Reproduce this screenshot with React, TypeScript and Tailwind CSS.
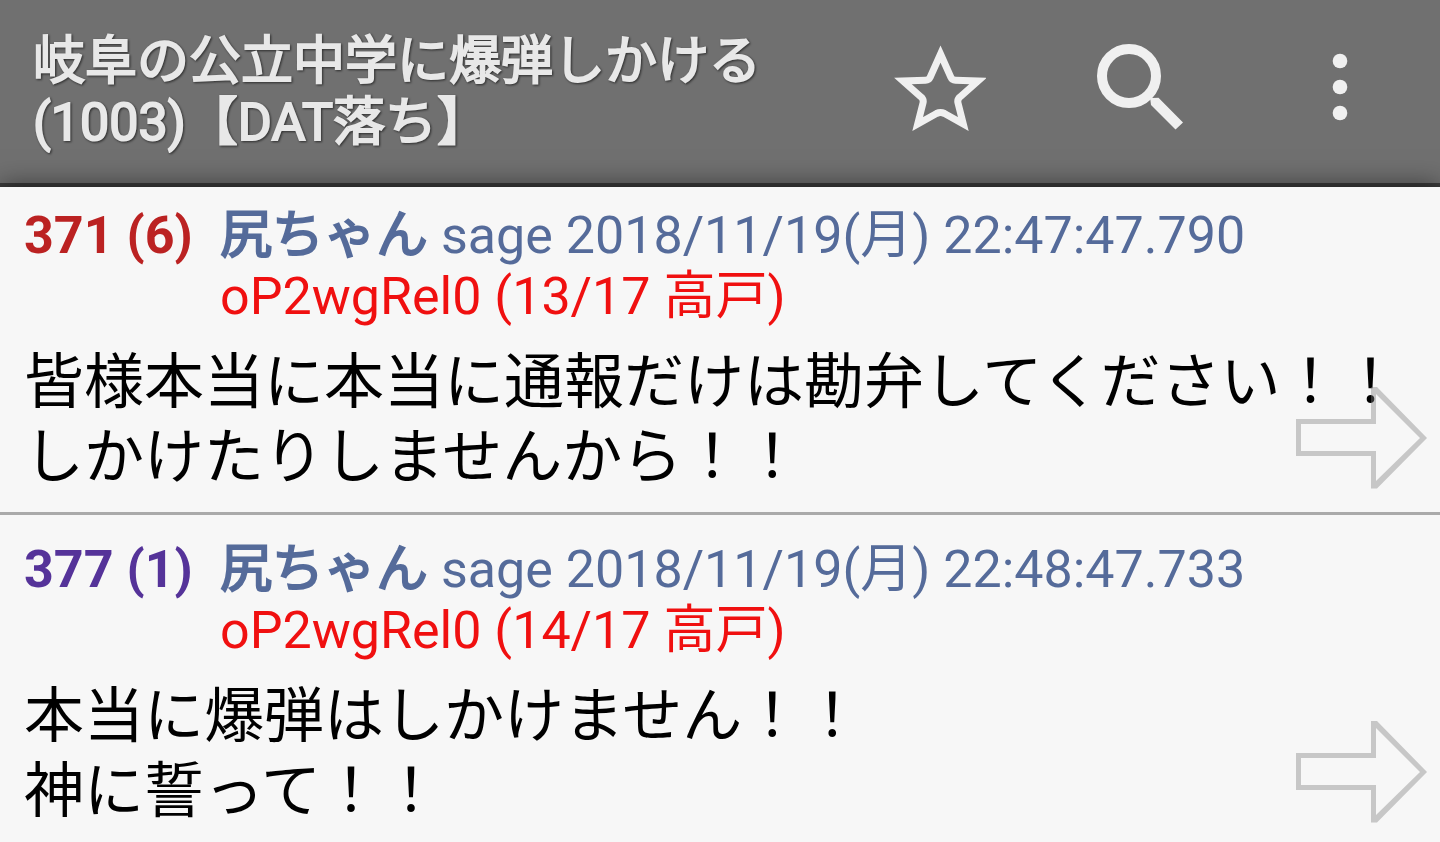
type Post = {
  no: number;
  replies: number;
  numberClass: string;
  name: string;
  mail: string;
  date: string;
  id: string;
  count: string;
  lines: string[];
};

const posts: Post[] = [
  {
    no: 371,
    replies: 6,
    numberClass: "text-[#bb2222]",
    name: "尻ちゃん",
    mail: "sage",
    date: "2018/11/19(月) 22:47:47.790",
    id: "oP2wgRel0",
    count: "(13/17 高戸)",
    lines: [
      "皆様本当に本当に通報だけは勘弁してください！！",
      "しかけたりしませんから！！",
    ],
  },
  {
    no: 377,
    replies: 1,
    numberClass: "text-[#553399]",
    name: "尻ちゃん",
    mail: "sage",
    date: "2018/11/19(月) 22:48:47.733",
    id: "oP2wgRel0",
    count: "(14/17 高戸)",
    lines: ["本当に爆弾はしかけません！！", "神に誓って！！"],
  },
];

export default function App() {
  return (
    <div
      lang="ja"
      className="flex h-dvh flex-col overflow-hidden bg-[#f7f7f7] font-['Roboto','Noto_Sans_CJK_JP',sans-serif]"
    >
      <Header />
      <main className="relative min-h-0 flex-1 overflow-y-auto bg-[#f7f7f7] shadow-[0_-2px_24px_rgba(0,0,0,0.5)] [scrollbar-width:none]">
        {posts.map((post) => (
          <PostItem key={post.no} post={post} />
        ))}
      </main>
    </div>
  );
}

function Header() {
  const btn = "flex h-[120px] w-[200px] items-center justify-center";
  return (
    <header className="flex shrink-0 items-start justify-between border-b-4 border-[#3c3c3c] bg-[#707070] pt-[27px] pb-[30px] pl-[33px]">
      <h1 className="pt-1 text-[52px] leading-[61px] font-normal text-[#e8e8e8] drop-shadow-[1px_1px_1px_rgba(0,0,0,0.6)] [-webkit-text-stroke:2px_#e8e8e8]">
        岐阜の公立中学に爆弾しかける
        <br />
        (1003)【DAT落ち】
      </h1>
      <div className="flex shrink-0 text-[#f0f0f0]">
        <button type="button" aria-label="お気に入り" className={btn}>
          <StarIcon />
        </button>
        <button type="button" aria-label="検索" className={btn}>
          <SearchIcon />
        </button>
        <button type="button" aria-label="メニュー" className={btn}>
          <MoreIcon />
        </button>
      </div>
    </header>
  );
}

function PostItem({ post }: { post: Post }) {
  return (
    <article className="relative border-b-3 border-[#aaaaaa] px-6 pt-6 pb-[17px] first:pt-[18px]">
      <div className="flex text-[52px] leading-[61px]">
        <div className={`w-[196px] shrink-0 font-bold ${post.numberClass}`}>
          {post.no} ({post.replies})
        </div>
        <div className="min-w-0 text-[#556b9a]">
          <span className="[-webkit-text-stroke:2px_#556b9a]">{post.name}</span>{" "}
          {post.mail} {post.date}
          <div className="text-[#f01010]">
            {post.id} {post.count}
          </div>
        </div>
      </div>
      <div className="mt-[18px] text-[60px] leading-[75px] text-black">
        {post.lines.map((line) => (
          <p key={line} className="whitespace-nowrap">
            {line}
          </p>
        ))}
      </div>
      <button
        type="button"
        aria-label={`${post.no} を開く`}
        className="absolute right-3 bottom-[23px]"
      >
        <ArrowIcon />
      </button>
    </article>
  );
}

function StarIcon() {
  return (
    <svg width="92" height="88" viewBox="0 0 92 88" fill="none">
      <path
        d="M46.500 11L57 34.500Q58 37 61.500 37.200L84 38L66.500 53.500Q63 56 64 60L69.300 81L50.500 70.500Q46.500 68.500 42.500 70.500L23.700 81L29 60Q30 56 26.500 53.500L9 38L31.500 37.200Q35 37 36 34.500Z"
        stroke="currentColor"
        strokeWidth="7"
        strokeMiterlimit="10"
      />
    </svg>
  );
}

function SearchIcon() {
  return (
    <svg width="88" height="88" viewBox="0 0 88 88" fill="none">
      <circle cx="33" cy="33" r="27" stroke="currentColor" strokeWidth="10" />
      <path
        d="M54 54L56 55L62.500 54.800L87 79.500L79.500 86.500L55 62Z"
        fill="currentColor"
      />
    </svg>
  );
}

function MoreIcon() {
  return (
    <svg width="16" height="68" viewBox="0 0 16 68" fill="currentColor">
      <circle cx="8" cy="8" r="7.300" />
      <circle cx="8" cy="34" r="7.300" />
      <circle cx="8" cy="60" r="7.300" />
    </svg>
  );
}

function ArrowIcon() {
  return (
    <svg width="132" height="102" viewBox="0 0 132 102" fill="none">
      <path
        d="M0 32H75V0H81L131 51L81 101.500H75V69H0ZM5 37V64H80V94L124 51L80 7V37Z"
        fill="#808080"
        fillOpacity="0.4"
        fillRule="evenodd"
      />
    </svg>
  );
}
